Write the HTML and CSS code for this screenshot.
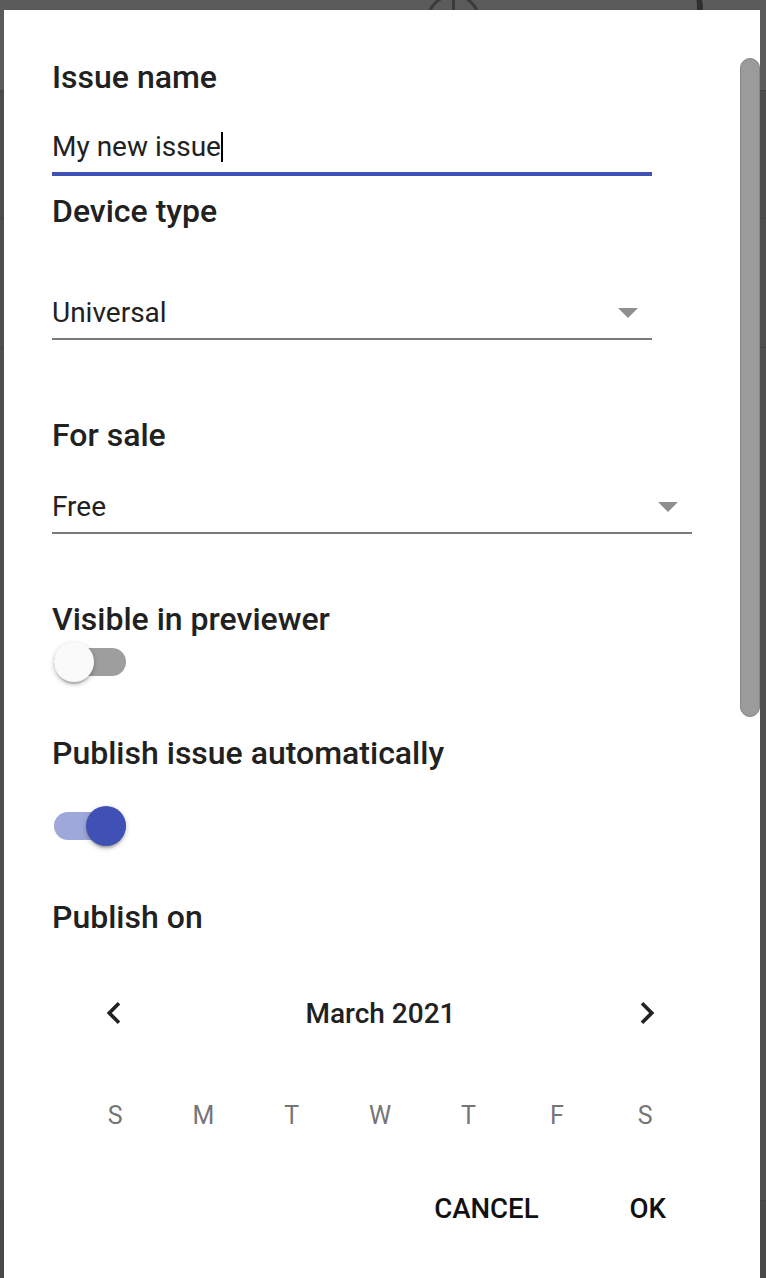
FILE: index.html
```html
<!DOCTYPE html>
<html lang="en">
<head>
<meta charset="utf-8">
<title>New issue</title>
<link rel="stylesheet" href="styles.css">
</head>
<body>
<div class="page">
  <div class="page-header">
    <span class="hdr-circle"><span class="hdr-circle-line"></span></span>
    <span class="hdr-moon"></span>
  </div>
  <div class="page-row row-a"></div>
  <div class="page-row row-b"></div>
  <div class="page-row row-c"></div>
  <div class="page-row row-d"></div>
</div>

<div class="dialog">
  <div class="dialog-content">
    <div class="label">Issue name</div>
    <div class="input input-focused">My new issue<span class="caret"></span></div>

    <div class="label label-device">Device type</div>
    <div class="select select-device">
      <span class="select-value">Universal</span>
      <span class="select-arrow"></span>
    </div>

    <div class="label label-sale">For sale</div>
    <div class="select select-sale">
      <span class="select-value">Free</span>
      <span class="select-arrow"></span>
    </div>

    <div class="label label-visible">Visible in previewer</div>
    <div class="toggle toggle-off toggle-first"><span class="thumb"></span></div>

    <div class="label label-auto">Publish issue automatically</div>
    <div class="toggle toggle-on toggle-second"><span class="thumb"></span></div>

    <div class="label label-on">Publish on</div>

    <div class="calendar">
      <div class="cal-header">
        <span class="cal-nav cal-prev">
          <svg viewBox="0 0 24 24" width="44" height="44"><path d="M15.41 7.41L14 6l-6 6 6 6 1.41-1.41L10.83 12z"/></svg>
        </span>
        <span class="cal-title">March 2021</span>
        <span class="cal-nav cal-next">
          <svg viewBox="0 0 24 24" width="44" height="44"><path d="M8.59 16.59L10 18l6-6-6-6-1.41 1.41L13.17 12z"/></svg>
        </span>
      </div>
      <div class="cal-weekdays">
        <span>S</span><span>M</span><span>T</span><span>W</span><span>T</span><span>F</span><span>S</span>
      </div>
    </div>

    <div class="actions">
      <span class="btn">CANCEL</span>
      <span class="btn">OK</span>
    </div>
  </div>
  <div class="scrollbar"></div>
</div>
</body>
</html>
```

FILE: styles.css
```css
* { box-sizing: border-box; }

html, body {
  margin: 0;
  padding: 0;
}

body {
  width: 766px;
  height: 1278px;
  overflow: hidden;
  background: #4b4b4b;
  font-family: Roboto, "Noto Sans", "Liberation Sans", sans-serif;
  position: relative;
}

/* ---------- page behind the overlay ---------- */
.page {
  display: flex;
  flex-direction: column;
}

.page-header {
  height: 90px;
  background: #5b5b5b;
  display: flex;
  align-items: flex-start;
}

.hdr-circle {
  width: 55px;
  height: 55px;
  margin-left: 426px;
  margin-top: -6px;
  border: 3px solid #3b3b3b;
  border-radius: 50%;
  display: flex;
  justify-content: center;
}

.hdr-circle-line {
  width: 3px;
  height: 24px;
  background: #3b3b3b;
}

.hdr-moon {
  width: 22px;
  height: 30px;
  margin-left: 200px;
  margin-top: -8px;
  border-radius: 50%;
  border-right: 6px solid #2f2f2f;
}

.page-row {
  border-top: 1px solid #444;
}

.row-a { height: 128px; background: #4d4d4d; }
.row-b { height: 129px; background: #4e4e4e; }
.row-c { height: 853px; background: #4f4f4f; }
.row-d { height: 78px; background: #494949; }

/* ---------- dialog ---------- */
.dialog {
  position: absolute;
  left: 4px;
  top: 10px;
  width: 756px;
  height: 1268px;
  background: #ffffff;
  overflow: hidden;
}

.dialog-content {
  padding: 49px 0 0 48px;
  display: flex;
  flex-direction: column;
  align-items: flex-start;
}

.label {
  font-size: 32px;
  line-height: 36px;
  font-weight: 500;
  color: #212121;
  white-space: nowrap;
}

.label-device { margin-top: 17px; }
.label-sale { margin-top: 77px; }
.label-visible { margin-top: 67px; }
.label-auto { margin-top: 59px; }
.label-on { margin-top: 59px; }

.input {
  margin-top: 36px;
  width: 600px;
  font-size: 28px;
  line-height: 32px;
  color: #212121;
  padding-bottom: 9px;
  white-space: nowrap;
}

.input-focused {
  border-bottom: 4px solid #3f51b5;
}

.caret {
  display: inline-block;
  width: 2px;
  height: 30px;
  background: #000;
  vertical-align: -6px;
  margin-left: 0;
}

.select {
  display: flex;
  align-items: center;
  font-size: 28px;
  line-height: 32px;
  color: #212121;
  padding-bottom: 9px;
  border-bottom: 2px solid #7a7a7a;
}

.select-device { margin-top: 68px; width: 600px; }
.select-sale { margin-top: 38px; width: 640px; }

.select-value { flex: 1; }

.select-arrow {
  width: 0;
  height: 0;
  border-left: 10px solid transparent;
  border-right: 10px solid transparent;
  border-top: 10px solid #8f8f8f;
  margin-right: 14px;
}

/* ---------- toggles ---------- */
.toggle {
  width: 72px;
  height: 28px;
  margin-left: 2px;
  border-radius: 14px;
  display: flex;
  align-items: center;
}

.toggle-first { margin-top: 11px; }
.toggle-second { margin-top: 41px; }

.thumb {
  width: 40px;
  height: 40px;
  flex: none;
  border-radius: 50%;
  box-shadow: 0 4px 2px -2px rgba(0,0,0,0.2), 0 2px 4px 0 rgba(0,0,0,0.14), 0 2px 6px 0 rgba(0,0,0,0.12);
}

.toggle-off {
  background: #9e9e9e;
  justify-content: flex-start;
}

.toggle-off .thumb { background: #fafafa; }

.toggle-on {
  background: #9fa8da;
  justify-content: flex-end;
}

.toggle-on .thumb { background: #3f51b5; }

/* ---------- calendar ---------- */
.calendar {
  margin-top: 54px;
  margin-left: 19px;
  width: 618px;
}

.cal-header {
  height: 48px;
  display: flex;
  align-items: center;
}

.cal-nav {
  width: 48px;
  height: 48px;
  display: flex;
  align-items: center;
  justify-content: center;
}

.cal-nav svg { fill: #222; }

.cal-prev { margin-left: 19px; }
.cal-next { margin-right: 18px; }

.cal-title {
  flex: 1;
  text-align: center;
  font-size: 28px;
  font-weight: 500;
  color: #212121;
}

.cal-weekdays {
  margin-top: 58px;
  height: 40px;
  display: grid;
  grid-template-columns: repeat(7, 88.33px);
  align-items: center;
  font-size: 25px;
  color: #757575;
}

.cal-weekdays span { text-align: center; }

/* ---------- actions ---------- */
.actions {
  margin-top: 50px;
  width: 708px;
  height: 48px;
  display: flex;
  justify-content: flex-end;
  align-items: center;
  padding-right: 70px;
  gap: 43px;
}

.btn {
  padding: 0 24px;
  font-size: 27.6px;
  font-weight: 500;
  color: #111;
  line-height: 48px;
}

/* ---------- scrollbar ---------- */
.scrollbar {
  position: absolute;
  right: 0;
  top: 48px;
  width: 20px;
  height: 659px;
  background: #9b9b9b;
  border: 1px solid #858585;
  border-radius: 10px;
}
```
